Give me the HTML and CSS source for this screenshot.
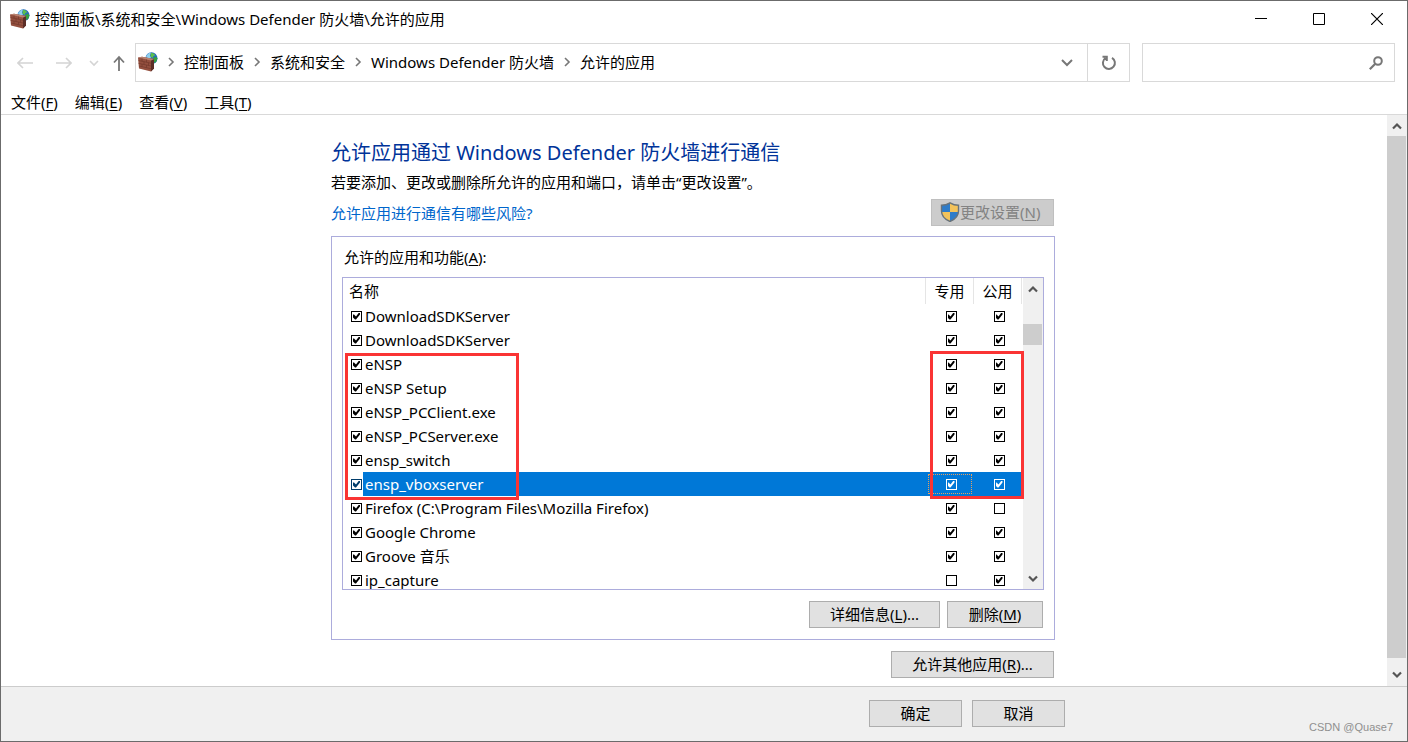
FILE: index.html
```html
<!DOCTYPE html>
<html lang="zh-CN">
<head>
<meta charset="utf-8">
<title>允许的应用</title>
<link rel="stylesheet" href="styles.css">
</head>
<body>
<svg class="defs" width="0" height="0" aria-hidden="true">
  <symbol id="firewall" viewBox="0 0 20 20">
    <circle cx="13.500" cy="6.300" r="6" fill="#2468c0"/>
    <path d="M8 5q1-4 5-4.500l-1 3 1 2-2 1.500-2-1z" fill="#8fd0ee"/>
    <path d="M13 .8q3 0 4.500 2.500l-2 .7-1 2-2-1.500z" fill="#5cc04a"/>
    <path d="M15 6l3-1.500 1.300 2q-.3 3-2.300 4.500l-2-2z" fill="#35a040"/>
    <path d="M0 5.500l4-.8 12 2.300v9.500l-3 3-12-3z" fill="#94503f"/>
    <path d="M13 8.500l3-1.500v9.500l-3 3z" fill="#5c2e27"/>
    <path d="M0 5.500l4-.8 12 2.300-3 1.500z" fill="#b98270"/>
    <path d="M.5 8.500l12.500 2.700M.5 11.300l12.500 2.700M1 14l12 2.700M4 6.500v2.700M8.500 7.500v2.700M6 9.700v2.700M10.500 10.700v2.700M4 12v2.700M8.500 13v2.700" stroke="#74392d" stroke-width=".7" fill="none"/>
  </symbol>
  <symbol id="crumb" viewBox="0 0 8 10"><path d="M2 1l4 4-4 4" fill="none" stroke="#777" stroke-width="1.6"/></symbol>
  <symbol id="up" viewBox="0 0 10 8"><path d="M1 6.500l4-4 4 4" fill="none" stroke="#555" stroke-width="2.2"/></symbol>
  <symbol id="down" viewBox="0 0 10 8"><path d="M1 1.500l4 4 4-4" fill="none" stroke="#555" stroke-width="2.2"/></symbol>
</svg>
<div class="window">
  <header class="titlebar">
    <svg class="app-icon"><use href="#firewall"/></svg>
    <span class="title">控制面板\系统和安全\Windows Defender 防火墙\允许的应用</span>
    <div class="caption">
      <button aria-label="最小化"><svg width="12" height="12"><path d="M0 5.500h12" stroke="#000"/></svg></button>
      <button aria-label="最大化"><svg width="12" height="12"><path d="M.5.5h11v11H.5z" fill="none" stroke="#000"/></svg></button>
      <button aria-label="关闭"><svg width="12" height="12"><path d="M0 0l12 12M12 0L0 12" stroke="#000" stroke-width="1.2"/></svg></button>
    </div>
  </header>
  <nav class="navbar">
    <div class="history">
      <button aria-label="后退"><svg width="16" height="12"><path d="M16 6H1M6 1L1 6l5 5" fill="none" stroke="#d4d4d4" stroke-width="1.6"/></svg></button>
      <button aria-label="前进"><svg width="16" height="12"><path d="M0 6h15M10 1l5 5-5 5" fill="none" stroke="#d4d4d4" stroke-width="1.6"/></svg></button>
      <button class="recent" aria-label="最近"><svg width="10" height="8"><path d="M1 2l4 4 4-4" fill="none" stroke="#d4d4d4" stroke-width="1.6"/></svg></button>
      <button class="parent" aria-label="上移"><svg width="12" height="16"><path d="M6 16V2M1 7.500L6 2l5 5.500" fill="none" stroke="#777" stroke-width="1.8"/></svg></button>
    </div>
    <div class="address">
      <div class="crumbs">
        <svg class="app-icon"><use href="#firewall"/></svg>
        <svg class="sep"><use href="#crumb"/></svg><a href="#">控制面板</a>
        <svg class="sep"><use href="#crumb"/></svg><a href="#">系统和安全</a>
        <svg class="sep"><use href="#crumb"/></svg><a href="#">Windows Defender 防火墙</a>
        <svg class="sep"><use href="#crumb"/></svg><a href="#">允许的应用</a>
      </div>
      <button class="drop" aria-label="以前的位置"><svg width="12" height="8"><path d="M1 1l5 5 5-5" fill="none" stroke="#777" stroke-width="2"/></svg></button>
      <button class="refresh" aria-label="刷新"><svg width="16" height="16"><path d="M11 2.800A6 6 0 1 1 4.500 3M1.500 1.800h4.300v4.300" fill="none" stroke="#777" stroke-width="2"/></svg></button>
    </div>
    <div class="search">
      <input type="text" aria-label="搜索">
      <svg width="14" height="14"><circle cx="9" cy="5" r="3.800" fill="none" stroke="#777" stroke-width="2"/><path d="M6.300 7.700L.8 13.200" stroke="#777" stroke-width="2.2"/></svg>
    </div>
  </nav>
  <div class="menubar">
    <button>文件(<u>F</u>)</button><button>编辑(<u>E</u>)</button><button>查看(<u>V</u>)</button><button>工具(<u>T</u>)</button>
  </div>
  <div class="body">
    <main class="scroll-area">
      <div class="page">
        <h1>允许应用通过 Windows Defender 防火墙进行通信</h1>
        <p>若要添加、更改或删除所允许的应用和端口，请单击“更改设置”。</p>
        <div class="link-row">
          <a href="#">允许应用进行通信有哪些风险?</a>
          <button class="btn change" disabled>
            <svg width="20" height="20" viewBox="0 0 20 20">
              <path d="M10 .8Q6 3.200 1.500 3.200V9q0 7 8.500 10.500Q18.500 16 18.500 9V3.200Q14 3.200 10 .8z" fill="#f3c35b"/>
              <path d="M10 .8Q6 3.200 1.500 3.200V10H10zM10 10h8.500q-.5 6-8.500 9.500z" fill="#2f7cc9"/>
              <path d="M10 .8Q6 3.200 1.500 3.200V9q0 7 8.500 10.500Q18.500 16 18.500 9V3.200Q14 3.200 10 .8z" fill="none" stroke="#69737b" stroke-width="1.4"/>
            </svg>更改设置(<u>N</u>)</button>
        </div>
        <section class="group">
          <div class="group-label" id="list-label">允许的应用和功能(<u>A</u>):</div>
          <div class="list">
            <div class="list-view">
              <table aria-labelledby="list-label">
                <colgroup><col><col class="net"><col class="net"></colgroup>
                <thead><tr><th>名称</th><th>专用</th><th>公用</th></tr></thead>
                <tbody>
                  <tr><td><label><input type="checkbox" checked>DownloadSDKServer</label></td><td><input type="checkbox" aria-label="专用" checked></td><td><input type="checkbox" aria-label="公用" checked></td></tr>
                  <tr><td><label><input type="checkbox" checked>DownloadSDKServer</label></td><td><input type="checkbox" aria-label="专用" checked></td><td><input type="checkbox" aria-label="公用" checked></td></tr>
                  <tr><td><label><input type="checkbox" checked>eNSP</label></td><td><input type="checkbox" aria-label="专用" checked></td><td><input type="checkbox" aria-label="公用" checked></td></tr>
                  <tr><td><label><input type="checkbox" checked>eNSP Setup</label></td><td><input type="checkbox" aria-label="专用" checked></td><td><input type="checkbox" aria-label="公用" checked></td></tr>
                  <tr><td><label><input type="checkbox" checked>eNSP_PCClient.exe</label></td><td><input type="checkbox" aria-label="专用" checked></td><td><input type="checkbox" aria-label="公用" checked></td></tr>
                  <tr><td><label><input type="checkbox" checked>eNSP_PCServer.exe</label></td><td><input type="checkbox" aria-label="专用" checked></td><td><input type="checkbox" aria-label="公用" checked></td></tr>
                  <tr><td><label><input type="checkbox" checked>ensp_switch</label></td><td><input type="checkbox" aria-label="专用" checked></td><td><input type="checkbox" aria-label="公用" checked></td></tr>
                  <tr class="selected"><td><label><input type="checkbox" checked>ensp_vboxserver</label></td><td class="focused"><input type="checkbox" aria-label="专用" checked></td><td><input type="checkbox" aria-label="公用" checked></td></tr>
                  <tr><td><label><input type="checkbox" checked>Firefox (C:\Program Files\Mozilla Firefox)</label></td><td><input type="checkbox" aria-label="专用" checked></td><td><input type="checkbox" aria-label="公用"></td></tr>
                  <tr><td><label><input type="checkbox" checked>Google Chrome</label></td><td><input type="checkbox" aria-label="专用" checked></td><td><input type="checkbox" aria-label="公用" checked></td></tr>
                  <tr><td><label><input type="checkbox" checked>Groove 音乐</label></td><td><input type="checkbox" aria-label="专用" checked></td><td><input type="checkbox" aria-label="公用" checked></td></tr>
                  <tr><td><label><input type="checkbox" checked>ip_capture</label></td><td><input type="checkbox" aria-label="专用"></td><td><input type="checkbox" aria-label="公用" checked></td></tr>
                </tbody>
              </table>
            </div>
            <div class="scrollbar list-scroll">
              <button aria-label="向上滚动"><svg width="10" height="8"><use href="#up"/></svg></button>
              <div class="track"><div class="thumb"></div></div>
              <button aria-label="向下滚动"><svg width="10" height="8"><use href="#down"/></svg></button>
            </div>
            <div class="mark mark-names"></div>
            <div class="mark mark-nets"></div>
          </div>
          <div class="actions">
            <button class="btn details">详细信息(<u>L</u>)...</button>
            <button class="btn remove">删除(<u>M</u>)</button>
          </div>
        </section>
        <div class="other"><button class="btn">允许其他应用(<u>R</u>)...</button></div>
      </div>
    </main>
    <div class="scrollbar page-scroll">
      <button aria-label="向上滚动"><svg width="10" height="8"><use href="#up"/></svg></button>
      <div class="track"><div class="thumb"></div></div>
      <button aria-label="向下滚动"><svg width="10" height="8"><use href="#down"/></svg></button>
    </div>
  </div>
  <footer class="footer">
    <div class="footer-inner"><button class="btn">确定</button><button class="btn">取消</button></div>
    <span class="watermark">CSDN @Quase7</span>
  </footer>
</div>
</body>
</html>
```
FILE: styles.css
```css
* { box-sizing: border-box; }
body {
  margin: 0;
  color: #000;
  font: 15px/20px "Noto Sans", "Noto Sans CJK SC", sans-serif;
}
button, input { font: inherit; color: inherit; margin: 0; }
button { padding: 0; border: 0; background: none; }
svg { display: block; flex: none; }
a { color: inherit; text-decoration: none; }
u { text-underline-offset: 2px; text-decoration-thickness: 1px; }
.defs { position: absolute; }
.window {
  display: flex;
  flex-direction: column;
  height: 100vh;
  border: 1px solid #6b6b6b;
  background: #fff;
}
.titlebar { display: flex; align-items: center; height: 36px; padding: 0 1px 0 9px; flex: none; }
.app-icon { width: 20px; height: 20px; }
.title { flex: 1; padding-left: 5px; }
.caption { display: flex; }
.caption button { display: grid; place-items: center; width: 58px; height: 36px; }
.navbar { display: flex; height: 50px; padding: 6px 12px 5px 0; flex: none; }
.history { display: flex; align-items: center; width: 134px; padding-left: 16px; }
.history button { margin-right: 23px; }
.history button + button { margin-right: 17px; }
.history .recent + .parent { margin-right: 0; }
.history .parent { margin-left: -3px; }
.address { display: flex; flex: 1; border: 1px solid #d9d9d9; }
.crumbs { display: flex; flex: 1; align-items: center; padding: 0 0 2px 2px; white-space: nowrap; }
.sep { width: 8px; height: 10px; margin: 0 9px; }
.drop { display: grid; place-items: center; width: 40px; }
.refresh { display: grid; place-items: center; width: 42px; border-left: 1px solid #d9d9d9; }
.search { display: flex; align-items: center; width: 253px; margin-left: 12px; padding-right: 11px; border: 1px solid #d9d9d9; }
.search input { flex: 1; min-width: 0; height: 36px; border: 0; outline: 0; background: none; }
.menubar { display: flex; gap: 17px; height: 28px; padding: 5px 10px 2px; border-bottom: 1px solid #d9d9d9; flex: none; }
.body { display: flex; flex: 1; min-height: 0; }
.scroll-area { flex: 1; overflow: hidden; padding-right: 2px; }
.page { max-width: 724px; margin: 0 auto; padding-top: 24px; }
h1 { margin: 0; font-size: 20px; line-height: 28px; font-weight: 400; color: #003399; }
p { margin: 5px 0 0; }
.link-row { display: flex; justify-content: space-between; align-items: center; margin-top: 7px; padding-right: 1px; color: #0066cc; }
.btn { height: 27px; padding-bottom: 2px; border: 1px solid #adadad; background: #e1e1e1; color: #000; }
.change { display: flex; align-items: center; justify-content: flex-start; width: 123px; padding: 0 0 2px 8px; background: #ccc; border-color: #bfbfbf; color: #838383; }
.group { margin-top: 10px; padding: 10px; border: 1px solid #acacdc; height: 404px; display: flex; flex-direction: column; }
.group-label { padding-left: 2px; }
.list { position: relative; display: flex; flex: 1; min-height: 0; margin-top: 10px; border: 1px solid #acacdc; }
.list-view { flex: 1; overflow: hidden; }
table { width: 100%; table-layout: fixed; border-collapse: separate; border-spacing: 0; }
.net { width: 48px; }
th { height: 26px; padding: 0; border-right: 1px solid #e5e5e5; font-weight: 400; }
th:first-child { padding-left: 6px; text-align: left; }
td { height: 24px; padding: 0; }
td:not(:first-child) input { margin: 0 auto; }
td:not(:first-child) { padding-left: 2px; }
td label { display: flex; align-items: center; height: 24px; padding-left: 8px; white-space: nowrap; }
td input { margin: 0; }
input[type="checkbox"] { appearance: none; display: block; flex: none; width: 11px; height: 11px; border: 1px solid; background: #fff; color: #000; }
label input[type="checkbox"] { margin-right: 3px; }
input[type="checkbox"]:checked::before {
  content: "";
  display: block;
  width: 7px;
  height: 7px;
  margin: 1px;
  background: currentColor;
  clip-path: polygon(0 2px, 1px 2px, 3px 4px, 6px 0, 7px 0, 7px 2px, 3px 7px, 2px 7px, 0 5px);
}
.selected { color: #fff; }
.selected td { background: #0078d7; }
.selected td:first-child { background: linear-gradient(to right, #fff 20px, #0078d7 20px); }
.selected td input[type="checkbox"] { background: none; color: #fff; }
.selected label input[type="checkbox"] { color: #003c6b; }
.focused { position: relative; }
.focused::after { content: ""; position: absolute; inset: 2px; border: 1px dotted #e8a060; }
.scrollbar { display: flex; flex-direction: column; width: 20px; padding-right: 1px; background: #f0f0f0; flex: none; }
.scrollbar button { display: grid; place-items: center; height: 21px; flex: none; }
.page-scroll button:last-child { height: 28px; padding-top: 5px; }
.track { flex: 1; }
.thumb { height: 100%; background: #cdcdcd; }
.list-scroll { margin-left: 1px; }
.list-scroll .track { padding-top: 25px; }
.list-scroll .thumb { height: 21px; }
.mark { position: absolute; border: 3px solid #fa3434; }
.mark-names { left: 2px; top: 75px; width: 174px; height: 147px; }
.mark-nets { right: 19px; top: 73px; width: 94px; height: 148px; }
.actions { display: flex; justify-content: flex-end; gap: 7px; padding: 11px 1px 1px 0; }
.details { width: 131px; }
.remove { width: 96px; }
.other { display: flex; justify-content: flex-end; padding: 11px 1px 0 0; }
.other .btn { width: 163px; }
.footer { position: relative; height: 55px; padding: 13px 2px 0 0; border-top: 1px solid #ccc; background: #f0f0f0; flex: none; }
.footer-inner { display: flex; justify-content: flex-end; gap: 10px; max-width: 724px; margin: 0 auto; }
.footer .btn { width: 93px; }
.watermark { position: absolute; right: 14px; bottom: 5px; font: 11px/18px "Liberation Sans", sans-serif; color: #8f8f8f; }
```
